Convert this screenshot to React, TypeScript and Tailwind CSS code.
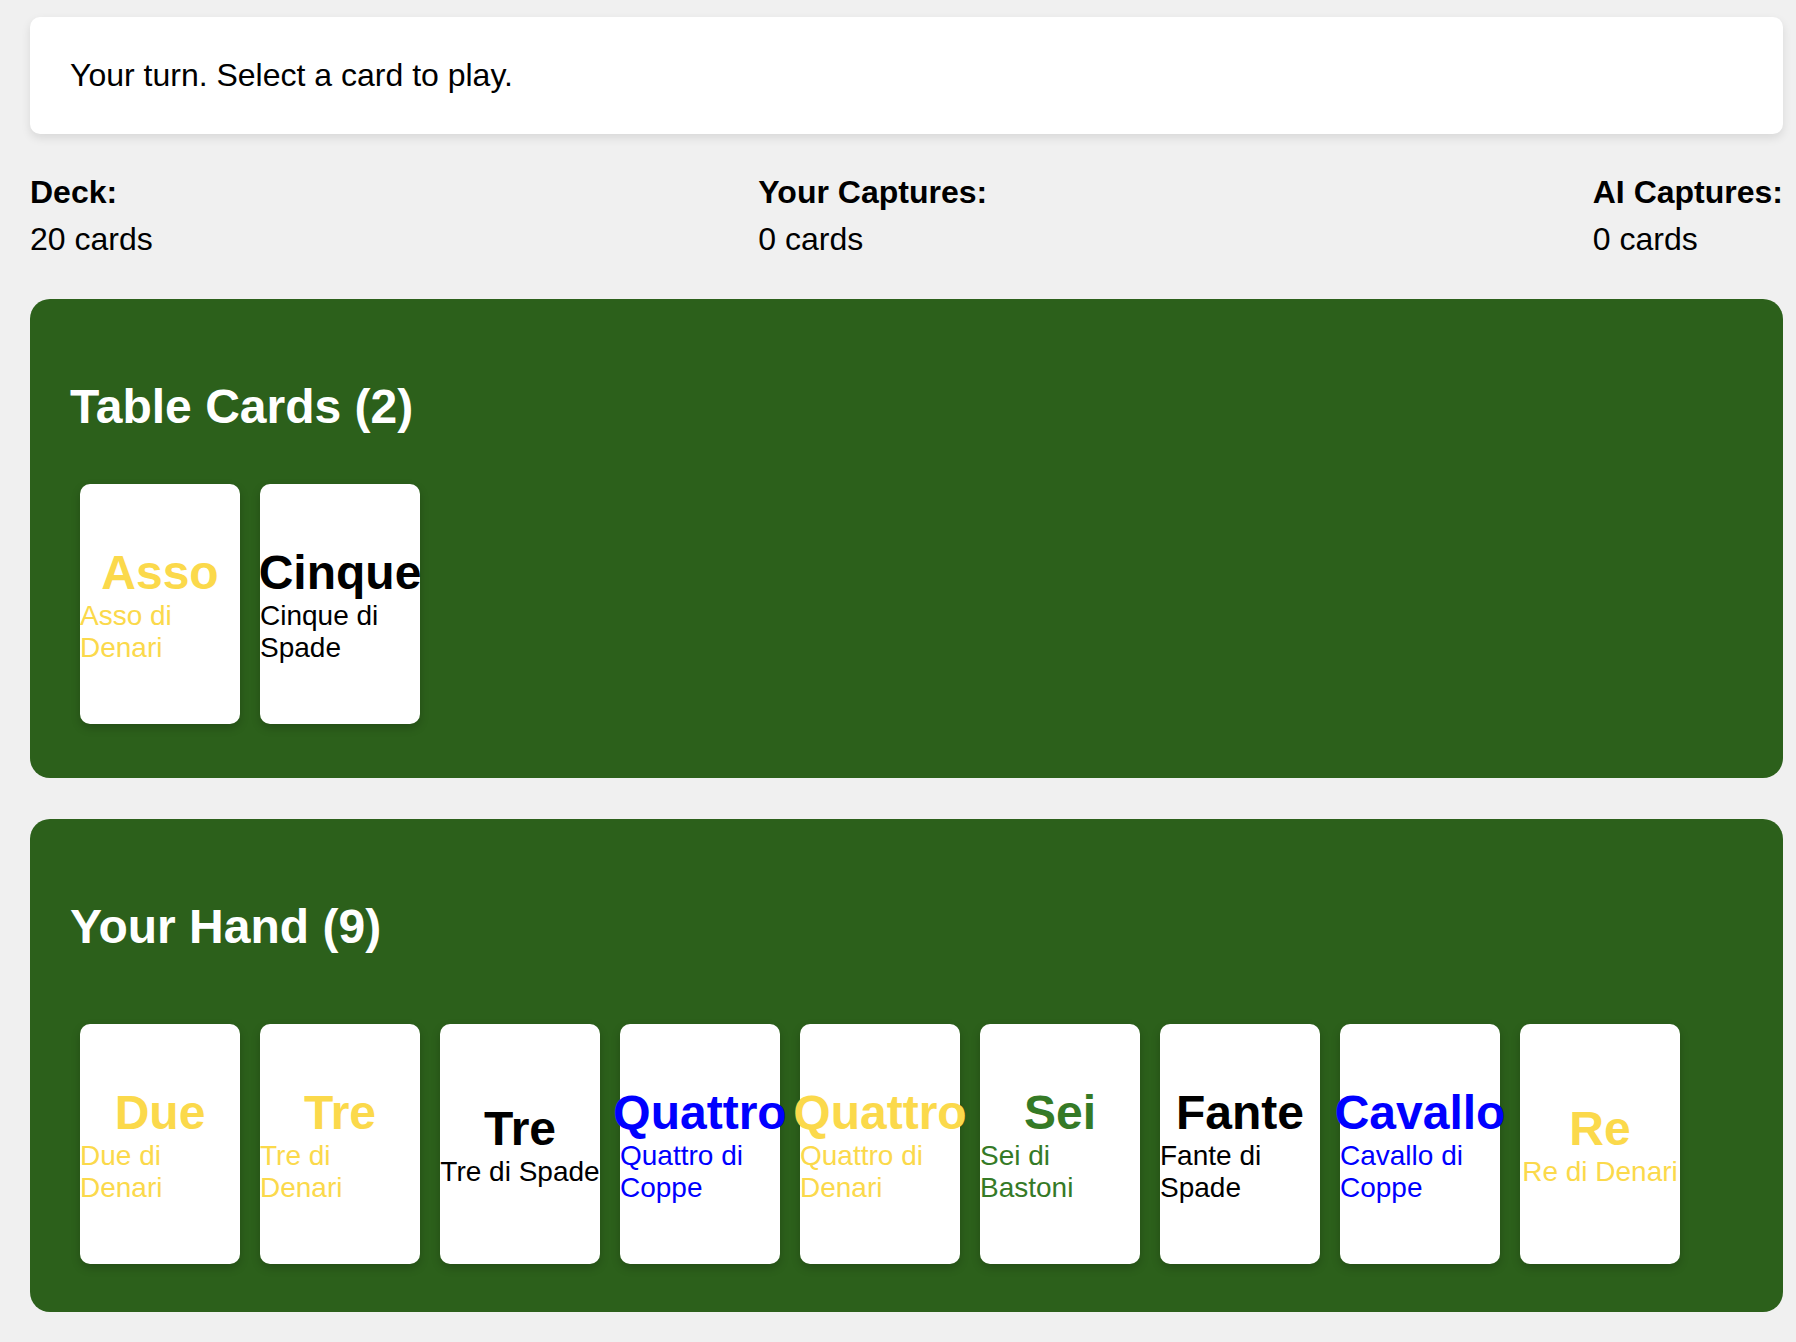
import React from "react";

type Suit = "Denari" | "Spade" | "Coppe" | "Bastoni";
type CardT = { name: string; suit: Suit };

const suitColor: Record<Suit, string> = {
  Denari: "text-[#fbd94b]",
  Spade: "text-black",
  Coppe: "text-[#0000ff]",
  Bastoni: "text-[#357a26]",
};

const tableCards: CardT[] = [
  { name: "Asso", suit: "Denari" },
  { name: "Cinque", suit: "Spade" },
];

const handCards: CardT[] = [
  { name: "Due", suit: "Denari" },
  { name: "Tre", suit: "Denari" },
  { name: "Tre", suit: "Spade" },
  { name: "Quattro", suit: "Coppe" },
  { name: "Quattro", suit: "Denari" },
  { name: "Sei", suit: "Bastoni" },
  { name: "Fante", suit: "Spade" },
  { name: "Cavallo", suit: "Coppe" },
  { name: "Re", suit: "Denari" },
];

function Card({ card }: { card: CardT }) {
  return (
    <div
      className={`w-[160px] h-[240px] shrink-0 bg-white rounded-[10px] shadow-[0_4px_10px_rgba(0,0,0,0.2)] flex flex-col items-center justify-center ${suitColor[card.suit]}`}
    >
      <div className="text-[48px] font-bold leading-[normal] whitespace-nowrap">{card.name}</div>
      <div className="text-[28px] leading-[normal]">
        {card.name} di {card.suit}
      </div>
    </div>
  );
}

export default function App() {
  return (
    <div
      className="min-h-screen bg-[#f0f0f0] pt-[17px] pl-[30px] pr-[13px] pb-[30px] text-black"
      style={{ fontFamily: '"Liberation Sans", Arial, Helvetica, sans-serif' }}
    >
      <div className="bg-white rounded-[10px] shadow-[0_4px_10px_rgba(0,0,0,0.1)] p-[40px] text-[32px] leading-[normal]">
        Your turn. Select a card to play.
      </div>

      <div className="mt-[40px] flex justify-between text-[32px] leading-[normal]">
        <div>
          <div className="font-bold mb-[10px]">Deck:</div>
          <div>20 cards</div>
        </div>
        <div>
          <div className="font-bold mb-[10px]">Your Captures:</div>
          <div>0 cards</div>
        </div>
        <div>
          <div className="font-bold mb-[10px]">AI Captures:</div>
          <div>0 cards</div>
        </div>
      </div>

      <div className="mt-[41px] bg-[#2c601b] rounded-[20px] p-[40px]">
        <h2 className="my-[40px] text-[48px] font-bold leading-[normal] text-white">Table Cards (2)</h2>
        <div className="flex flex-wrap gap-[20px] pl-[10px] pt-[10px] pb-[14px]">
          {tableCards.map((c, i) => (
            <Card key={i} card={c} />
          ))}
        </div>
      </div>

      <div className="mt-[41px] bg-[#2c601b] rounded-[20px] p-[40px]">
        <h2 className="my-[40px] text-[48px] font-bold leading-[normal] text-white">Your Hand (9)</h2>
        <div className="flex flex-wrap gap-[20px] pl-[10px] pt-[30px] pb-[8px]">
          {handCards.map((c, i) => (
            <Card key={i} card={c} />
          ))}
        </div>
      </div>
    </div>
  );
}
